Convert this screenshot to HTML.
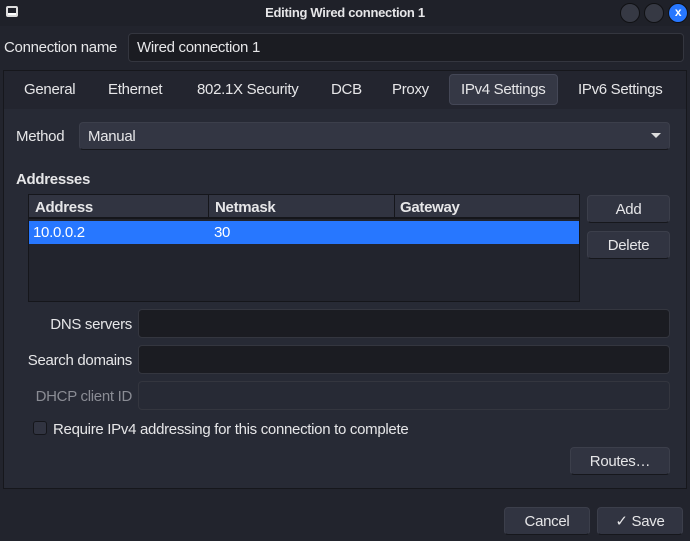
<!DOCTYPE html>
<html><head><style>
*{box-sizing:border-box;margin:0;padding:0}
body{width:690px;height:541px;background:#22242d;font-family:"Liberation Sans",sans-serif;font-size:15px;color:#e6e6e8;position:relative;overflow:hidden;letter-spacing:-0.3px}
.a{position:absolute}
.t{position:absolute;white-space:nowrap;line-height:18px}
.entry{position:absolute;background:#1b1c22;border:1px solid #34363f;border-radius:4px}
.btn{position:absolute;background:#313441;border:1px solid #3c3f4b;border-bottom-color:#16171c;border-radius:4px;text-align:center;line-height:27px}
.circ{position:absolute;width:20px;height:20px;border-radius:50%;background:#363944;border:1px solid #101114;top:3px}
</style></head><body>
<div class="a" style="left:0;top:0;width:690px;height:26px;background:#1f2129"></div>
<div class="a" style="left:6px;top:6px;width:12px;height:11px;border:2px solid #ddd;border-radius:2px;background:#fff"></div>
<div class="a" style="left:8px;top:8px;width:8px;height:5px;background:#1f2129"></div>
<div class="t" style="left:0;width:690px;text-align:center;top:4px;font-weight:bold;font-size:13px">Editing Wired connection 1</div>
<div class="circ" style="left:620px"></div>
<div class="circ" style="left:644px"></div>
<div class="circ" style="left:668px;background:#2777ff;border-color:#101114;color:#fff;font-weight:bold;font-size:12px;text-align:center;line-height:17px">x</div>

<div class="t" style="left:4px;top:39px">Connection name</div>
<div class="entry" style="left:128px;top:33px;width:556px;height:29px"></div>
<div class="t" style="left:137px;top:39px">Wired connection 1</div>

<div class="a" style="left:3px;top:70px;width:684px;height:419px;background:#272a35;border:1px solid #16171c"></div>
<div class="a" style="left:4px;top:71px;width:682px;height:38px;background:#23252f"></div>
<div class="a" style="left:449px;top:74px;width:109px;height:31px;background:#353845;border:1px solid #444756;border-radius:4px"></div>
<div class="t" style="left:24px;top:81px">General</div>
<div class="t" style="left:108px;top:81px">Ethernet</div>
<div class="t" style="left:197px;top:81px">802.1X Security</div>
<div class="t" style="left:331px;top:81px">DCB</div>
<div class="t" style="left:392px;top:81px">Proxy</div>
<div class="t" style="left:461px;top:81px">IPv4 Settings</div>
<div class="t" style="left:578px;top:81px">IPv6 Settings</div>

<div class="t" style="left:16px;top:128px">Method</div>
<div class="btn" style="left:79px;top:122px;width:591px;height:28px;background:#333643"></div>
<div class="t" style="left:88px;top:128px">Manual</div>
<div class="a" style="left:651px;top:133px;width:0;height:0;border-left:5px solid transparent;border-right:5px solid transparent;border-top:5px solid #ddd"></div>

<div class="t" style="left:16px;top:171px;font-weight:bold">Addresses</div>
<div class="a" style="left:28px;top:194px;width:552px;height:108px;background:#22242d;border:1px solid #15161b"></div>
<div class="a" style="left:29px;top:195px;width:550px;height:24px;background:#313441;border-bottom:2px solid #15161b"></div>
<div class="a" style="left:208px;top:195px;width:1px;height:24px;background:#15161b"></div>
<div class="a" style="left:394px;top:195px;width:1px;height:24px;background:#15161b"></div>
<div class="t" style="left:35px;top:199px;font-weight:bold">Address</div>
<div class="t" style="left:215px;top:199px;font-weight:bold">Netmask</div>
<div class="t" style="left:400px;top:199px;font-weight:bold">Gateway</div>
<div class="a" style="left:29px;top:221px;width:550px;height:23px;background:#2777ff"></div>
<div class="t" style="left:33px;top:224px;color:#fff">10.0.0.2</div>
<div class="t" style="left:214px;top:224px;color:#fff">30</div>
<div class="btn" style="left:587px;top:195px;width:83px;height:28px">Add</div>
<div class="btn" style="left:587px;top:231px;width:83px;height:28px">Delete</div>

<div class="t" style="left:0;width:132px;text-align:right;top:316px">DNS servers</div>
<div class="entry" style="left:138px;top:309px;width:532px;height:29px"></div>
<div class="t" style="left:0;width:132px;text-align:right;top:352px">Search domains</div>
<div class="entry" style="left:138px;top:345px;width:532px;height:29px"></div>
<div class="t" style="left:0;width:132px;text-align:right;top:388px;color:#8a8c94">DHCP client ID</div>
<div class="entry" style="left:138px;top:381px;width:532px;height:29px;background:#272a35"></div>

<div class="a" style="left:33px;top:421px;width:14px;height:14px;background:#313441;border:1px solid #15161b;border-radius:3px"></div>
<div class="t" style="left:53px;top:421px">Require IPv4 addressing for this connection to complete</div>
<div class="btn" style="left:570px;top:447px;width:100px;height:28px">Routes…</div>

<div class="btn" style="left:504px;top:507px;width:86px;height:28px">Cancel</div>
<div class="btn" style="left:597px;top:507px;width:86px;height:28px">✓ Save</div>
</body></html>
